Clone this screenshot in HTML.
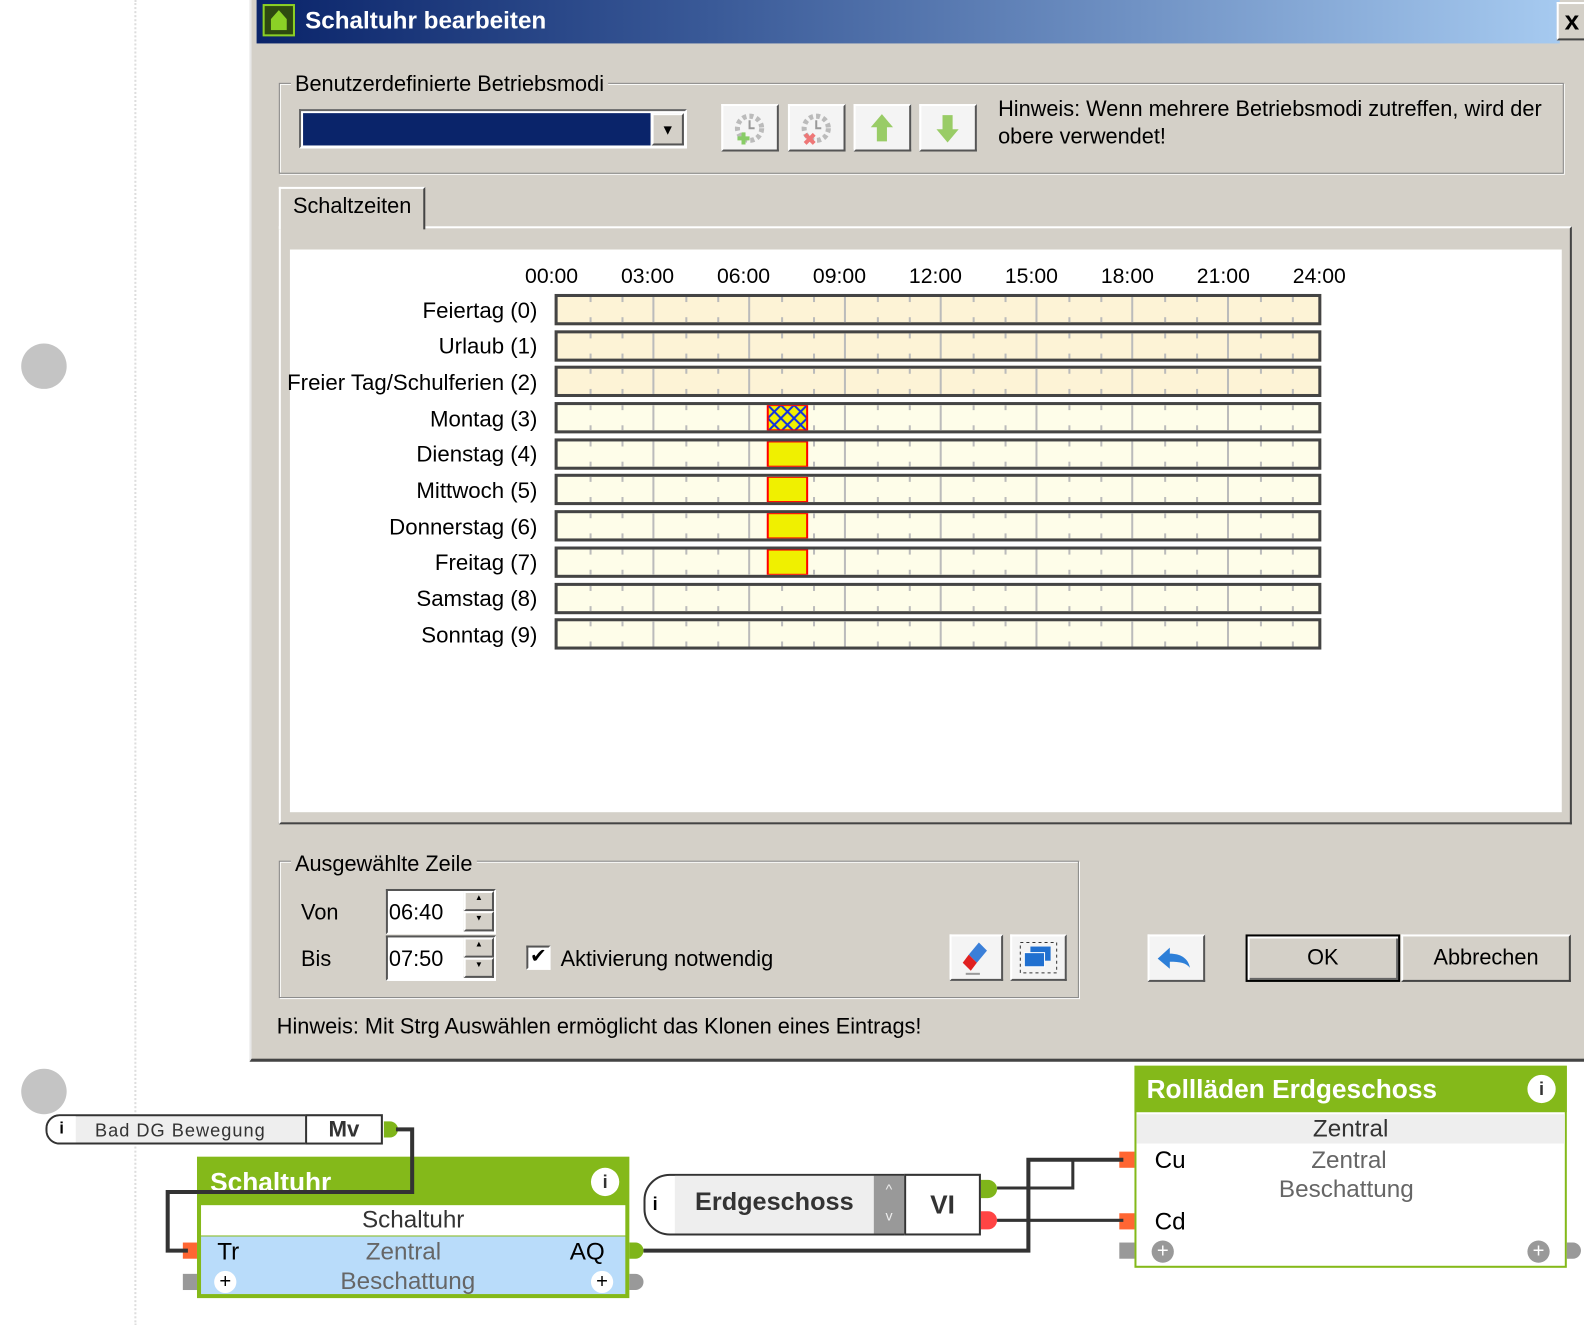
<!DOCTYPE html>
<html><head><meta charset="utf-8"><style>
*{margin:0;padding:0;box-sizing:border-box}
body{width:1584px;height:1312px;background:#fff;position:relative;overflow:hidden;font-family:"Liberation Sans",sans-serif;}
#wrap{position:absolute;left:0;top:0;width:1568px;height:1299px;transform:scale(1.0102);transform-origin:0 0}
.a{position:absolute}
.t{position:absolute;font-size:21.5px;color:#000;white-space:nowrap;line-height:24px}
.btn{position:absolute;background:#f4f4f4;border:2px solid;border-color:#fff #555 #555 #fff}
.grp{position:absolute;border:1px solid #888;box-shadow:1px 1px 0 #fff, inset 1px 1px 0 #fff}
.row{position:absolute;left:549px;width:759px;height:31px;border:3px solid #444}
.lbl{position:absolute;right:1036px;font-size:22px;line-height:24px;white-space:nowrap}
.tm{position:absolute;font-size:21px;line-height:24px;top:262px;width:80px;text-align:center}
</style></head><body><div id="wrap">
<div class="a" style="left:133px;top:0;width:0;height:1312px;border-left:2px dotted #ddd"></div>
<div class="a" style="left:21px;top:340px;width:45px;height:45px;border-radius:50%;background:#c4c4c4"></div>
<div class="a" style="left:21px;top:1058px;width:45px;height:45px;border-radius:50%;background:#c4c4c4"></div>

<!-- dialog -->
<div class="a" style="left:247px;top:0;width:1337px;height:1051px;background:#d4d0c8;border-bottom:3px solid #444;border-left:2px solid #e8e8e8"></div>
<div class="a" style="left:254px;top:0;width:1290px;height:43px;background:linear-gradient(90deg,#0a246a 0%,#3a5a98 35%,#a6caf0 100%)"></div>
<div class="a" style="left:260px;top:4px;width:32px;height:32px;background:#2e4a10;border:2px solid #8bd026"></div>
<div class="a" style="left:268px;top:10px;width:16px;height:20px;background:#8bd026;clip-path:polygon(50% 0,100% 45%,100% 100%,0 100%,0 45%)"></div>
<div class="t" style="left:302px;top:9px;color:#fff;font-weight:bold;font-size:24px">Schaltuhr bearbeiten</div>
<div class="a" style="left:1541px;top:2px;width:30px;height:38px;background:#d4d0c8;border:2px solid;border-color:#fff #444 #444 #fff;font:bold 26px 'Liberation Sans';text-align:center;line-height:32px">x</div>

<div class="grp" style="left:276px;top:82px;width:1272px;height:90px"></div>
<div class="t" style="left:288px;top:71px;background:#d4d0c8;padding:0 4px">Benutzerdefinierte Betriebsmodi</div>
<div class="a" style="left:296px;top:108px;width:384px;height:39px;border:2px solid;border-color:#666 #fff #fff #666;background:#fff"></div>
<div class="a" style="left:300px;top:112px;width:344px;height:32px;background:#0a246a"></div>
<div class="btn" style="left:645px;top:112px;width:32px;height:32px;background:#d4d0c8;font-size:14px;text-align:center;line-height:28px">▼</div>
<div class="btn" style="left:714px;top:103px;width:57px;height:47px"><svg width="53" height="43"><circle cx="26" cy="22" r="12" fill="none" stroke="#bbb" stroke-width="5" stroke-dasharray="4 3"/><path d="M26 14v8h5" stroke="#999" stroke-width="2" fill="none"/><path d="M20 26v12M14 32h12" stroke="#8c6" stroke-width="4"/></svg></div>
<div class="btn" style="left:780px;top:103px;width:57px;height:47px"><svg width="53" height="43"><circle cx="26" cy="22" r="12" fill="none" stroke="#bbb" stroke-width="5" stroke-dasharray="4 3"/><path d="M26 14v8h5" stroke="#999" stroke-width="2" fill="none"/><path d="M15 28l9 9M24 28l-9 9" stroke="#e77" stroke-width="4"/></svg></div>
<div class="btn" style="left:845px;top:103px;width:57px;height:47px"><svg width="53" height="43"><path d="M26 8l11 13h-6v14h-10v-14h-6z" fill="#9c6"/></svg></div>
<div class="btn" style="left:910px;top:103px;width:57px;height:47px"><svg width="53" height="43"><path d="M26 36l11-13h-6v-14h-10v14h-6z" fill="#9c6"/></svg></div>
<div class="t" style="left:988px;top:95px;line-height:27px">Hinweis: Wenn mehrere Betriebsmodi zutreffen, wird der<br>obere verwendet!</div>

<!-- tab -->
<div class="a" style="left:276px;top:224px;width:1280px;height:592px;border:2px solid;border-color:#fff #444 #444 #fff"></div>
<div class="a" style="left:276px;top:185px;width:145px;height:42px;background:#d4d0c8;border:2px solid;border-color:#fff #444 transparent #fff;border-bottom:none"></div>
<div class="t" style="left:290px;top:192px">Schaltzeiten</div>
<div class="a" style="left:287px;top:247px;width:1259px;height:557px;background:#fff"></div>

<div class="tm" style="left:506px">00:00</div><div class="tm" style="left:601px">03:00</div><div class="tm" style="left:696px">06:00</div><div class="tm" style="left:791px">09:00</div><div class="tm" style="left:886px">12:00</div><div class="tm" style="left:981px">15:00</div><div class="tm" style="left:1076px">18:00</div><div class="tm" style="left:1171px">21:00</div><div class="tm" style="left:1266px">24:00</div>

<div class="lbl" style="top:296px">Feiertag (0)</div>
<div class="lbl" style="top:331px">Urlaub (1)</div>
<div class="lbl" style="top:367px">Freier Tag/Schulferien (2)</div>
<div class="lbl" style="top:403px">Montag (3)</div>
<div class="lbl" style="top:438px">Dienstag (4)</div>
<div class="lbl" style="top:474px">Mittwoch (5)</div>
<div class="lbl" style="top:510px">Donnerstag (6)</div>
<div class="lbl" style="top:545px">Freitag (7)</div>
<div class="lbl" style="top:581px">Samstag (8)</div>
<div class="lbl" style="top:617px">Sonntag (9)</div>

<svg class="a" style="left:0;top:0" width="10" height="10">
<defs>
<pattern id="hx" width="13" height="13" patternUnits="userSpaceOnUse"><rect width="13" height="13" fill="#f0f000"/><path d="M0 0L13 13M13 0L0 13" stroke="#1030e0" stroke-width="2"/></pattern>
</defs>
</svg>
<div id="rw"></div>
<script>
var tops=[291,327,362,398,434,469,505,541,577,612],h='';
tops.forEach(function(t,i){
var bg=i<3?'#fdf3d6':'#fefde9';
h+='<div class="row" style="top:'+t+'px;background:'+bg+'"><svg width="753" height="25" style="position:absolute;left:0;top:0">';
for(var k=1;k<24;k++){var x=k*31.6;if(k%3==0)h+='<rect x="'+(x-1)+'" y="0" width="2" height="25" fill="#bbb"/>';else h+='<rect x="'+x+'" y="0" width="2" height="5" fill="#bbb"/><rect x="'+x+'" y="20" width="2" height="5" fill="#bbb"/>';}
if(i>=3&&i<=7)h+='<rect x="208" y="0" width="39" height="25" fill="'+(i==3?'url(#hx)':'#f0f000')+'" stroke="#f00" stroke-width="2"/>';
h+='</svg></div>';});
document.getElementById('rw').innerHTML=h;
</script>

<!-- group 2 -->
<div class="grp" style="left:276px;top:852px;width:792px;height:136px"></div>
<div class="t" style="left:288px;top:843px;background:#d4d0c8;padding:0 4px">Ausgewählte Zeile</div>
<div class="t" style="left:298px;top:891px">Von</div>
<div class="t" style="left:298px;top:937px">Bis</div>
<div class="a" style="left:382px;top:880px;width:109px;height:45px;background:#fff;border:2px solid;border-color:#555 #fff #fff #555"></div>
<div class="t" style="left:385px;top:891px">06:40</div>
<div class="btn" style="left:459px;top:882px;width:30px;height:20px;background:#d4d0c8;font-size:8px;text-align:center">▲</div>
<div class="btn" style="left:459px;top:902px;width:30px;height:20px;background:#d4d0c8;font-size:8px;text-align:center">▼</div>
<div class="a" style="left:382px;top:926px;width:109px;height:45px;background:#fff;border:2px solid;border-color:#555 #fff #fff #555"></div>
<div class="t" style="left:385px;top:937px">07:50</div>
<div class="btn" style="left:459px;top:928px;width:30px;height:20px;background:#d4d0c8;font-size:8px;text-align:center">▲</div>
<div class="btn" style="left:459px;top:948px;width:30px;height:20px;background:#d4d0c8;font-size:8px;text-align:center">▼</div>
<div class="a" style="left:521px;top:936px;width:24px;height:24px;background:#fff;border:2px solid;border-color:#555 #fff #fff #555;font-size:20px;line-height:18px;text-align:center">✔</div>
<div class="t" style="left:555px;top:937px">Aktivierung notwendig</div>
<div class="btn" style="left:940px;top:925px;width:53px;height:46px"><svg width="49" height="42"><path d="M27 6l8 8-10 12-8-8z" fill="#3a7fd8"/><path d="M17 18l8 8-6 8-8-8z" fill="#e02020"/><rect x="14" y="36" width="14" height="2" fill="#999"/></svg></div>
<div class="btn" style="left:1000px;top:925px;width:56px;height:46px"><svg width="52" height="42"><rect x="8" y="6" width="36" height="30" fill="none" stroke="#333" stroke-dasharray="3 3"/><rect x="18" y="10" width="20" height="14" fill="#2070d0"/><rect x="12" y="16" width="20" height="14" fill="#2070d0" stroke="#fff"/></svg></div>
<div class="btn" style="left:1136px;top:925px;width:57px;height:47px"><svg width="53" height="43"><path d="M8 22l12-11v6c10 0 18 4 20 14c-4-5-10-6-20-6v7z" fill="#2d7fd8"/></svg></div>
<div class="a" style="left:1233px;top:925px;width:153px;height:47px;border:2px solid #000;background:#d4d0c8;box-shadow:inset 2px 2px 0 #fff,inset -2px -2px 0 #666;text-align:center;font-size:21.5px;line-height:42px">OK</div>
<div class="a" style="left:1387px;top:925px;width:168px;height:47px;border:2px solid;border-color:#fff #444 #444 #fff;background:#d4d0c8;text-align:center;font-size:21.5px;line-height:42px">Abbrechen</div>
<div class="t" style="left:274px;top:1004px">Hinweis: Mit Strg Auswählen ermöglicht das Klonen eines Eintrags!</div>

<!-- diagram -->
<div class="a" style="left:45px;top:1103px;width:334px;height:30px;border:2px solid #333;border-radius:14px 0 0 14px;background:#eee"></div>
<div class="a" style="left:47px;top:1105px;width:28px;height:26px;background:#fff;border-radius:12px 0 0 12px;font:bold 16px 'Liberation Sans';text-align:center;line-height:26px">i</div>
<div class="t" style="left:94px;top:1107px;font-size:18px;letter-spacing:1px;color:#333">Bad DG Bewegung</div>
<div class="a" style="left:302px;top:1103px;width:77px;height:30px;border:2px solid #333;background:#fff;font:bold 22px 'Liberation Sans';text-align:center;line-height:26px;color:#333">Mv</div>
<div class="a" style="left:380px;top:1110px;width:14px;height:16px;border-radius:0 8px 8px 0;background:#7fb51a"></div>

<div class="a" style="left:195px;top:1145px;width:428px;height:140px;background:#84b91a"></div>
<div class="t" style="left:208px;top:1156px;color:#fff;font-weight:bold;font-size:26px;line-height:28px">Schaltuhr</div>
<div class="a" style="left:585px;top:1156px;width:28px;height:28px;border-radius:50%;background:#fff;font:bold 18px 'Liberation Sans';text-align:center;line-height:28px;color:#333">i</div>
<div class="a" style="left:199px;top:1193px;width:420px;height:30px;background:#fff;text-align:center;font-size:24px;line-height:30px;color:#333">Schaltuhr</div>
<div class="a" style="left:199px;top:1224px;width:420px;height:57px;background:#b9dcfa"></div>
<div class="t" style="left:215px;top:1226px;font-size:24px;line-height:28px">Tr</div>
<div class="t" style="left:362px;top:1226px;font-size:24px;line-height:28px;color:#666">Zentral</div>
<div class="t" style="left:564px;top:1226px;font-size:24px;line-height:28px">AQ</div>
<div class="t" style="left:337px;top:1255px;font-size:24px;line-height:28px;color:#666">Beschattung</div>
<div class="a" style="left:212px;top:1258px;width:22px;height:22px;border-radius:50%;background:#fff;text-align:center;font-size:20px;line-height:22px">+</div>
<div class="a" style="left:585px;top:1258px;width:22px;height:22px;border-radius:50%;background:#fff;text-align:center;font-size:20px;line-height:22px">+</div>
<div class="a" style="left:181px;top:1230px;width:14px;height:16px;background:#ff6633"></div>
<div class="a" style="left:181px;top:1261px;width:14px;height:16px;background:#999"></div>
<div class="a" style="left:623px;top:1230px;width:14px;height:16px;border-radius:0 8px 8px 0;background:#7fb51a"></div>
<div class="a" style="left:623px;top:1261px;width:14px;height:16px;border-radius:0 8px 8px 0;background:#999"></div>

<div class="a" style="left:637px;top:1162px;width:334px;height:61px;border:2px solid #333;border-radius:26px 0 0 26px;background:#fff"></div>
<div class="a" style="left:668px;top:1164px;width:197px;height:57px;background:#eee"></div>
<div class="t" style="left:646px;top:1180px;font-weight:bold;font-size:18px">i</div>
<div class="t" style="left:688px;top:1178px;font-size:25px;font-weight:bold;color:#333">Erdgeschoss</div>
<div class="a" style="left:865px;top:1164px;width:30px;height:57px;background:#999;color:#eee;text-align:center;font-size:14px;line-height:26px">^<br>v</div>
<div class="a" style="left:895px;top:1162px;width:76px;height:61px;border:2px solid #333;background:#fff;font:bold 26px 'Liberation Sans';text-align:center;line-height:56px;color:#333">VI</div>
<div class="a" style="left:971px;top:1168px;width:16px;height:18px;border-radius:0 9px 9px 0;background:#7fb51a"></div>
<div class="a" style="left:971px;top:1199px;width:16px;height:18px;border-radius:0 9px 9px 0;background:#f44"></div>

<div class="a" style="left:1123px;top:1055px;width:428px;height:200px;border:2px solid #84b91a;background:#fff"></div>
<div class="a" style="left:1123px;top:1055px;width:428px;height:46px;background:#84b91a"></div>
<div class="t" style="left:1135px;top:1064px;color:#fff;font-weight:bold;font-size:26px;line-height:28px">Rollläden Erdgeschoss</div>
<div class="a" style="left:1512px;top:1064px;width:28px;height:28px;border-radius:50%;background:#fff;font:bold 18px 'Liberation Sans';text-align:center;line-height:28px;color:#333">i</div>
<div class="a" style="left:1125px;top:1103px;width:424px;height:29px;background:#eee;text-align:center;font-size:24px;line-height:29px;color:#333">Zentral</div>
<div class="t" style="left:1143px;top:1135px;font-size:24px;line-height:28px">Cu</div>
<div class="t" style="left:1143px;top:1196px;font-size:24px;line-height:28px">Cd</div>
<div class="t" style="left:1298px;top:1135px;font-size:24px;line-height:28px;color:#666">Zentral</div>
<div class="t" style="left:1266px;top:1164px;font-size:24px;line-height:28px;color:#666">Beschattung</div>
<div class="a" style="left:1108px;top:1140px;width:15px;height:16px;background:#ff6633"></div>
<div class="a" style="left:1108px;top:1201px;width:15px;height:16px;background:#ff6633"></div>
<div class="a" style="left:1108px;top:1230px;width:15px;height:16px;background:#999"></div>
<div class="a" style="left:1551px;top:1230px;width:14px;height:16px;border-radius:0 8px 8px 0;background:#999"></div>
<div class="a" style="left:1140px;top:1228px;width:22px;height:22px;border-radius:50%;background:#999;color:#fff;text-align:center;font-size:20px;line-height:22px">+</div>
<div class="a" style="left:1512px;top:1228px;width:22px;height:22px;border-radius:50%;background:#999;color:#fff;text-align:center;font-size:20px;line-height:22px">+</div>

<svg class="a" style="left:0;top:0" width="1584" height="1312" fill="none" stroke="#333">
<path d="M392 1118H408V1180H166V1238H186" stroke-width="4"/>
<path d="M637 1238H1018V1148H1112" stroke-width="4"/>
<path d="M987 1176H1062V1148" stroke-width="3"/>
<path d="M987 1208H1112" stroke-width="3"/>
</svg>
</div></body></html>
